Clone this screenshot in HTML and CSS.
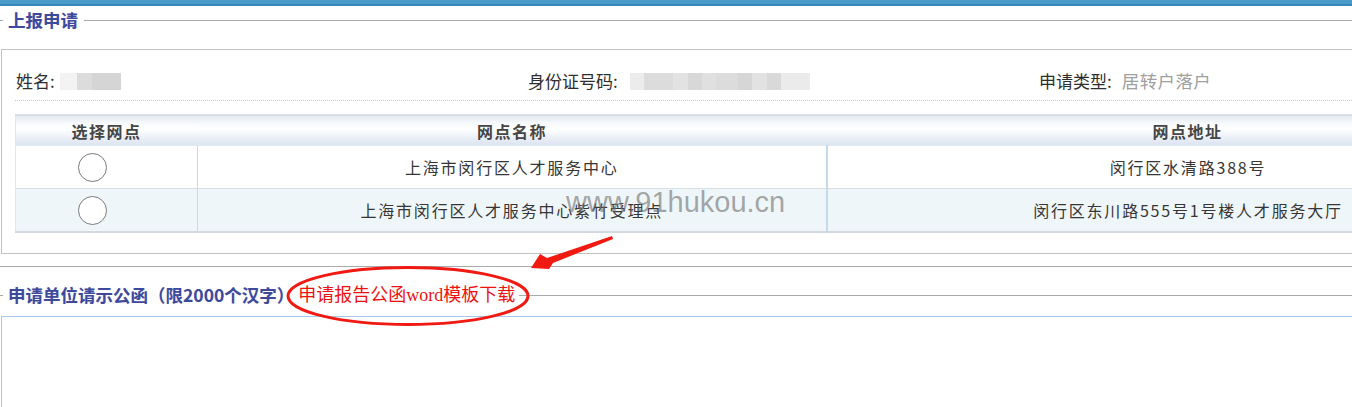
FILE: index.html
```html
<!DOCTYPE html>
<html lang="zh-CN">
<head>
<meta charset="utf-8">
<title>上报申请</title>
<link rel="stylesheet" href="styles.css">
</head>
<body>
<div class="page">
  <div class="topbar"></div>

  <div class="legend-row">
    <span class="tick"></span>
    <span class="legend">上报申请</span>
    <span class="rule"></span>
  </div>

  <div class="box">
    <div class="info">
      <div class="info-cell">姓名:<span class="mask mask-name"></span></div>
      <div class="info-cell">身份证号码:<span class="mask mask-id"></span></div>
      <div class="info-cell">申请类型:<span class="value">居转户落户</span></div>
    </div>

    <table class="sites">
      <thead>
        <tr>
          <th class="c1">选择网点</th>
          <th class="c2">网点名称</th>
          <th class="c3">网点地址</th>
        </tr>
      </thead>
      <tbody>
        <tr class="row-a">
          <td class="c1"><span class="radio"></span></td>
          <td class="c2">上海市闵行区人才服务中心</td>
          <td class="c3">闵行区水清路388号</td>
        </tr>
        <tr class="row-b">
          <td class="c1"><span class="radio"></span></td>
          <td class="c2">上海市闵行区人才服务中心紫竹受理点</td>
          <td class="c3">闵行区东川路555号1号楼人才服务大厅</td>
        </tr>
      </tbody>
    </table>
  </div>

  <div class="outer-rule"></div>

  <div class="legend-row legend-row-2">
    <span class="tick"></span>
    <span class="legend">申请单位请示公函（限2000个汉字）</span>
    <a class="download">申请报告公函word模板下载</a>
    <span class="rule"></span>
  </div>

  <div class="textarea"></div>

  <div class="watermark">www.91hukou.cn</div>

  <svg class="marks" width="1352" height="407" viewBox="0 0 1352 407" xmlns="http://www.w3.org/2000/svg">
    <ellipse cx="408" cy="296" rx="120" ry="28.5" fill="none" stroke="#f01a12" stroke-width="3"/>
    <polygon points="612,236 613,239 553,263 549,269 531,268 540,254 547,258" fill="#f01a12"/>
  </svg>
</div>
</body>
</html>
```

FILE: styles.css
```css
html, body {
  margin: 0;
  padding: 0;
  overflow: hidden;
  background: #ffffff;
}

body {
  font-family: "Noto Sans CJK SC", "Noto Sans", sans-serif;
  font-size: 16px;
  color: #333333;
}

.page {
  position: relative;
  width: 1560px;
  height: 407px;
}

.topbar {
  height: 4px;
  background: #4a9bc9;
  border-bottom: 2px solid #3686b9;
}

.legend-row {
  display: flex;
  align-items: center;
  height: 28px;
}

.tick {
  width: 3px;
  border-top: 1px solid #aaaaaa;
}

.rule {
  flex: 1;
  border-top: 1px solid #aaaaaa;
}

.legend {
  font-weight: bold;
  font-size: 17.5px;
  line-height: 24px;
  color: #3d4a9c;
  padding: 0 6px 0 5px;
  text-shadow: 0 0 1px rgba(160, 120, 200, 0.25);
}

.box {
  margin: 15px 0 0 1px;
  border: 1px solid #c2c2c2;
  border-right: none;
  padding: 0 0 20px 13px;
}

.info {
  display: grid;
  grid-template-columns: 512px 511px 1fr;
  padding-top: 19px;
  padding-bottom: 7px;
  line-height: 24px;
  font-size: 17px;
  color: #2e2e2e;
  border-bottom: 1px dotted #c8c8c8;
}

.info-cell {
  padding-left: 1px;
  display: flex;
  align-items: center;
}

.mask {
  display: inline-block;
  height: 17px;
}

.mask-name {
  width: 61px;
  margin-left: 5px;
  background: linear-gradient(90deg, #f3f3f3 0 28%, #dcdcdc 28% 52%, #d5d5d5 52% 100%);
}

.mask-id {
  width: 180px;
  margin-left: 12px;
  background: linear-gradient(90deg, #ececec 0 8%, #dcdcdc 8% 24%, #e2e2e2 24% 32%, #d8d8d8 32% 40%, #e0e0e0 40% 48%, #dcdcdc 48% 60%, #d6d6d6 60% 68%, #e2e2e2 68% 76%, #d9d9d9 76% 84%, #ebebeb 84% 100%);
}

.value {
  color: #a0a0a0;
  margin-left: 10px;
  font-size: 17.5px;
  letter-spacing: 0.4px;
}

.sites {
  margin-top: 13px;
  width: 1533px;
  border-collapse: collapse;
  border-top: 2px solid #d9dee4;
  border-bottom: 2px solid #d3d9df;
  border-left: 1px solid #e2e7ec;
  table-layout: fixed;
}

.sites .c1 { width: 181px; }
.sites .c2 { width: 630px; }

.sites th {
  height: 29px;
  padding: 0;
  font-weight: bold;
  font-size: 16px;
  letter-spacing: 1.5px;
  color: #454545;
  text-align: center;
  background: linear-gradient(#e4e9f1 0%, #f7f9fc 25%, #ffffff 45%, #eef2f8 70%, #dce4f0 100%);
}

.sites td {
  padding: 0;
  text-align: center;
  font-size: 16px;
  letter-spacing: 1.8px;
  color: #363636;
}

.sites td.c1 {
  padding-right: 27px;
}

.row-a td {
  height: 42px;
  background: #ffffff;
  border-top: 1px solid #e2e8ef;
}

.row-b td {
  height: 42px;
  background: #eff6f9;
  border-top: 1px solid #d9dee3;
}

.sites td.c2 {
  border-left: 1px solid #c6d8eb;
  border-right: 2px solid #c6d8eb;
}

.radio {
  display: inline-block;
  width: 27px;
  height: 27px;
  border: 1.5px solid #7a7a7a;
  border-radius: 50%;
  vertical-align: middle;
  background: #ffffff;
}

.outer-rule {
  margin-top: 12px;
  border-top: 1px solid #aaaaaa;
}

.legend-row-2 {
  margin-top: 14px;
}

.legend-row-2 .legend {
  font-size: 17.5px;
  padding-right: 4px;
}

.download {
  color: #ee1111;
  font-family: "Liberation Serif", "Noto Sans CJK SC", serif;
  font-size: 18px;
  line-height: 24px;
  padding-right: 4px;
}

.textarea {
  margin: 7px 0 0 1px;
  height: 100px;
  border-top: 1px solid #a9c8e9;
  border-left: 1px solid #a9c8e9;
}

.watermark {
  position: absolute;
  left: 566px;
  top: 188px;
  font-family: "Liberation Sans", Arial, sans-serif;
  font-size: 29px;
  line-height: 29px;
  color: rgba(110, 110, 110, 0.6);
  pointer-events: none;
}

.marks {
  position: absolute;
  left: 0;
  top: 0;
  pointer-events: none;
}
```
